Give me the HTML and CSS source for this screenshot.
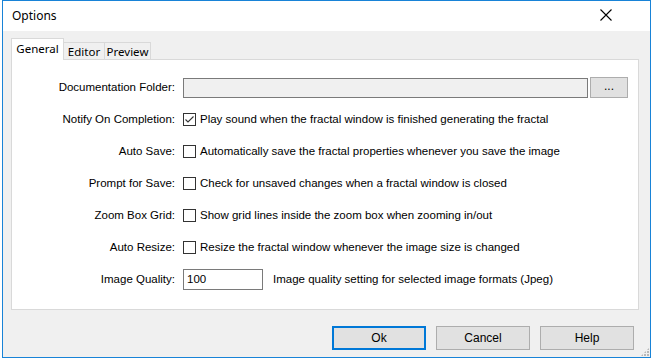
FILE: index.html
```html
<!DOCTYPE html>
<html>
<head>
<meta charset="utf-8">
<link rel="stylesheet" href="styles.css">
</head>
<body>
<div class="window">
  <div class="titlebar">
    <span class="title">Options</span>
    <svg class="close" width="12" height="12" viewBox="0 0 12 12"><path d="M0.5 0.5 L11.5 11.5 M11.5 0.5 L0.5 11.5" stroke="#000" stroke-width="1.1" fill="none"/></svg>
  </div>
  <div class="content">
    <div class="tabs">
      <div class="tab active t-general">General</div>
      <div class="tab t-editor">Editor</div>
      <div class="tab t-preview">Preview</div>
    </div>
    <div class="panel">
      <div class="form">
        <label class="lbl">Documentation Folder:</label>
        <div class="ctrl folder"><div class="path"></div><button class="browse">...</button></div>

        <label class="lbl">Notify On Completion:</label>
        <div class="ctrl"><span class="cb checked"><svg width="11" height="11" viewBox="0 0 11 11"><path d="M1.5 5.5 L4 8 L9.5 2.5" stroke="#333" stroke-width="1.1" fill="none"/></svg></span><span class="txt">Play sound when the fractal window is finished generating the fractal</span></div>

        <label class="lbl">Auto Save:</label>
        <div class="ctrl"><span class="cb"></span><span class="txt">Automatically save the fractal properties whenever you save the image</span></div>

        <label class="lbl">Prompt for Save:</label>
        <div class="ctrl"><span class="cb"></span><span class="txt">Check for unsaved changes when a fractal window is closed</span></div>

        <label class="lbl">Zoom Box Grid:</label>
        <div class="ctrl"><span class="cb"></span><span class="txt">Show grid lines inside the zoom box when zooming in/out</span></div>

        <label class="lbl">Auto Resize:</label>
        <div class="ctrl"><span class="cb"></span><span class="txt">Resize the fractal window whenever the image size is changed</span></div>

        <label class="lbl">Image Quality:</label>
        <div class="ctrl"><div class="num">100</div><span class="hint">Image quality setting for selected image formats (Jpeg)</span></div>
      </div>
    </div>
    <div class="buttons">
      <button class="btn default">Ok</button>
      <button class="btn">Cancel</button>
      <button class="btn">Help</button>
    </div>
    <div class="grip"></div>
  </div>
</div>
</body>
</html>
```
FILE: styles.css
```css
html, body {
  margin: 0;
  padding: 0;
  background: #fff;
}
body {
  width: 652px;
  height: 359px;
  overflow: hidden;
  font-family: "Liberation Sans", Arial, sans-serif;
  font-size: 11.5px;
  color: #000;
}
.window {
  margin-left: 2px;
  width: 649px;
  height: 358px;
  box-sizing: border-box;
  border: 1px solid #1883d7;
  display: flex;
  flex-direction: column;
}
.titlebar {
  height: 30px;
  flex: none;
  background: #fff;
  display: flex;
  align-items: center;
  justify-content: space-between;
  padding: 0 38px 0 9px;
}
.title {
  font-family: "Noto Sans", sans-serif;
  font-size: 12px;
  margin-top: -1px;
}
.close {
  margin-top: -2px;
  display: block;
}
.content {
  flex: 1;
  background: #f0f0f0;
  padding: 7px 11px 0 8px;
  display: flex;
  flex-direction: column;
  position: relative;
}
.tabs {
  display: flex;
  align-items: flex-end;
  height: 21px;
  position: relative;
  z-index: 1;
}
.tab {
  box-sizing: border-box;
  font-family: "Noto Sans", sans-serif;
  font-size: 11.5px;
  height: 17px;
  border: 1px solid #d9d9d9;
  border-bottom: none;
  background: #f0f0f0;
  display: flex;
  align-items: center;
  justify-content: center;
  margin-left: -1px;
}
.tab.active {
  height: 22px;
  margin-bottom: -1px;
  background: #fff;
  margin-left: 0;
  padding-bottom: 3px;
}
.t-general { width: 53px; }
.t-editor { width: 42px; }
.t-preview { width: 47px; }
.panel {
  height: 251px;
  box-sizing: border-box;
  background: #fff;
  border: 1px solid #d9d9d9;
  padding-top: 17px;
}
.form {
  display: grid;
  grid-template-columns: 163px 1fr;
  grid-auto-rows: 20px;
  row-gap: 12px;
  column-gap: 8px;
}
.lbl {
  text-align: right;
  align-self: center;
  white-space: nowrap;
}
.ctrl {
  display: flex;
  align-items: center;
}
.folder {
  gap: 2px;
  padding-right: 10px;
}
.path {
  flex: 1;
  height: 20px;
  box-sizing: border-box;
  border: 1px solid #7a7a7a;
  background: #f0f0f0;
  margin-top: 2px;
}
.browse {
  width: 38px;
  height: 21px;
  box-sizing: border-box;
  border: 1px solid #adadad;
  background: #e1e1e1;
  font: 12px "Liberation Sans", sans-serif;
  padding: 0 0 4px;
  margin-top: 1px;
}
.cb {
  width: 13px;
  height: 13px;
  box-sizing: border-box;
  border: 1px solid #333;
  background: #fff;
  display: flex;
  align-items: center;
  justify-content: center;
  flex: none;
}
.txt {
  margin-left: 4px;
  white-space: nowrap;
}
.num {
  width: 80px;
  height: 21px;
  box-sizing: border-box;
  border: 1px solid #7a7a7a;
  padding: 3px 0 0 3px;
  flex: none;
}
.hint {
  margin-left: 10px;
  white-space: nowrap;
}
.buttons {
  display: flex;
  justify-content: flex-end;
  gap: 10px;
  padding: 16px 5px 0 0;
}
.btn {
  width: 94px;
  height: 24px;
  box-sizing: border-box;
  border: 1px solid #adadad;
  background: #e1e1e1;
  font: 12px "Liberation Sans", sans-serif;
  color: #000;
  padding: 0;
}
.btn.default {
  border: 2px solid #0078d7;
}
.grip {
  position: absolute;
  right: 1px;
  bottom: 1px;
  width: 8px;
  height: 8px;
  background:
    radial-gradient(circle at 1px 1px, #b8b8b8 1px, transparent 1.2px) 0 0 / 3px 3px;
  clip-path: polygon(100% 0, 100% 100%, 0 100%);
}
```
